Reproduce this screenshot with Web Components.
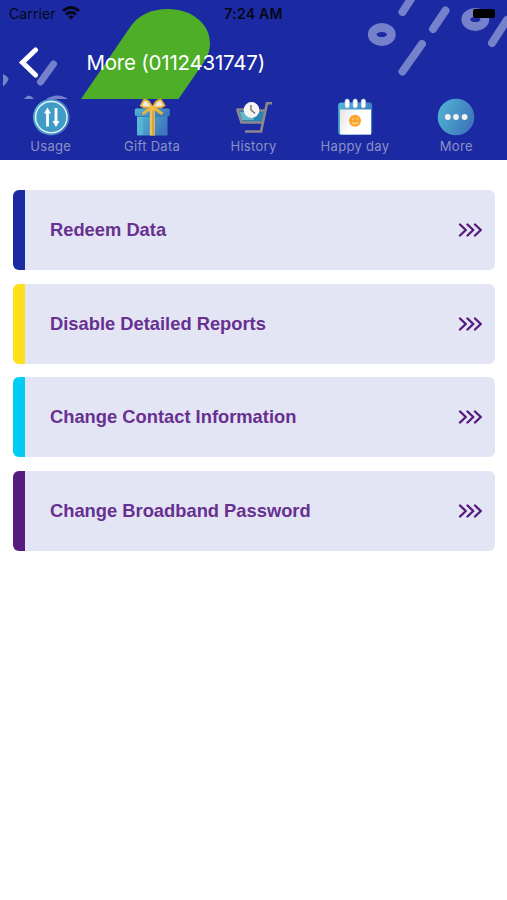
<!DOCTYPE html>
<html lang="en">
<head>
<meta charset="utf-8">
<meta name="viewport" content="width=device-width">
<title>More</title>
<style>
html,body{margin:0;height:100%;background:#fff;font-family:Inter,"Liberation Sans",sans-serif}
</style>
</head>
<body>
<more-page></more-page>
<script>
const define = (name, html) => {
  const t = document.createElement('template');
  t.innerHTML = html;
  customElements.define(name, class extends HTMLElement {
    constructor() {
      super();
      this.attachShadow({ mode: 'open' }).append(t.content.cloneNode(true));
    }
  });
};

define('header-art', `
<style>:host{display:block;position:absolute;inset:0 0 auto 0;height:98.5px;overflow:hidden}svg{display:block}</style>
<svg width="507" height="99" viewBox="0 0 507 99">
  <path d="M81 99 L129.500 28 C138 15 151 9 168 9 C192 9 210 24 210 43 C210 50 208 56 204 62 L178.500 99Z" fill="#4eae28"/>
  <g stroke="#7581ca" fill="none" stroke-linecap="round" stroke-width="8">
    <ellipse cx="381.800" cy="34.500" rx="9.500" ry="7" stroke-width="8.800"/>
    <ellipse cx="475.300" cy="19.500" rx="9.500" ry="7" stroke-width="8.800"/>
    <path d="M402.500 12 L413 -4 M433 29 L445.500 10.500 M402.500 71.500 L422 44 M492 43 L507 20"/>
    <path d="M40.500 82 L53.500 64" stroke-width="7"/>
  </g>
  <path d="M3 74 Q9 77 8.500 80 L4 86 Q2 86 3 82Z" fill="#7581ca"/>
  <path d="M24 99 Q29 92 34 99Z M46 99 Q58 92 68 99Z" fill="#7581ca"/>
</svg>`);

define('status-bar', `
<style>
:host{display:grid;grid-template-columns:1fr auto 1fr;align-items:center;height:28px;color:#050716;font-size:14px;line-height:28px;position:relative}
.l{display:flex;align-items:center;gap:6px;padding-left:9px}
.l span{letter-spacing:.12px}
b{font-weight:600;font-size:14px;letter-spacing:.25px}
.r{display:flex;justify-content:flex-end;padding-right:12px}
.r i{display:block;width:22px;height:9px;border-radius:2px;background:#000;margin-top:-1px}
svg{display:block;margin-top:-2px}
</style>
<div class="l"><span>Carrier</span>
<svg width="18" height="14" viewBox="0 0 18 14"><g fill="none" stroke="#050716" stroke-width="2.800"><path d="M1 5 Q9 -2 17 5"/><path d="M4 8.500 Q9 4 14 8.500"/></g><path d="M6.300 10.600 Q9 8.300 11.700 10.600 L9 13.500Z" fill="#050716"/></svg></div>
<b>7:24 AM</b>
<div class="r"><i></i></div>`);

define('nav-bar', `
<style>
:host{display:flex;align-items:center;height:70px;position:relative;color:#fff}
svg{display:block;margin-left:18px}
h1{font-weight:400;font-size:20.5px;line-height:26px;margin:0 0 0 48.5px;letter-spacing:-.22px;white-space:nowrap}
</style>
<svg width="20" height="32" viewBox="0 0 20 32"><path d="M17.500 3 L4.500 15.500 L17.500 28" fill="none" stroke="#fff" stroke-width="5" stroke-linecap="round" stroke-linejoin="miter"/></svg>
<h1><slot></slot></h1>`);

define('tab-item', `
<style>
:host{flex:1 1 0;display:flex;flex-direction:column;align-items:center;color:#8b91c5;font-size:13px;line-height:16px;letter-spacing:.3px;white-space:nowrap}
::slotted(svg){display:block;width:40px;height:40px}
</style>
<slot name="icon"></slot><span><slot></slot></span>`);

define('tab-strip', `
<style>:host{display:flex;height:61px;position:relative}svg{display:block}</style>
<svg width="0" height="0" style="position:absolute"><defs>
<linearGradient id="g" x1="0" x2="1" y1="0" y2=".4"><stop stop-color="#52b8d6"/><stop offset="1" stop-color="#3f78bd"/></linearGradient>
<linearGradient id="p" x1="0" x2="1" y1="0" y2=".4"><stop offset="0" stop-color="#e2e2e2"/><stop offset=".55" stop-color="#fff"/></linearGradient></defs></svg>
<tab-item><svg slot="icon" viewBox="0 0 40 40"><circle cx="20.300" cy="19.200" r="18.300" fill="url(#g)"/><circle cx="20.300" cy="19.200" r="15.700" fill="#419bc7" stroke="#e7f3f8" stroke-width="1.400"/><g fill="#fff"><path d="M16.500 9.500 L20 15.500 H17.900 V28.500 H15.100 V15.500 H13Z"/><path d="M25 29 L21.500 23 H23.600 V10 H26.400 V23 H28.500Z"/></g></svg>Usage</tab-item>
<tab-item><svg slot="icon" viewBox="0 0 40 40"><path d="M5 18 H35.500 V37.500 H5Z" fill="url(#g)"/><rect x="2.800" y="10.500" width="35" height="7.500" rx="1.500" fill="url(#g)"/><path d="M5 18.500H35.500" stroke="#3583b2"/><path d="M5 19 H11 V37 H5Z" fill="#62c1d8" opacity=".5"/><path d="M17.800 11 H22.800 V37.500 H17.800Z" fill="#ebc260"/><path d="M21 11V37.500" stroke="#d59c2c" stroke-width="1.500"/><g fill="#f0ead8" stroke="#e2ae38" stroke-width="2" stroke-linejoin="round"><path d="M20 9.500 Q17 1 12 2 L8.800 7.500 L12 9.500Z M21 9.500 Q24 1 29 2 L32.500 7.500 L29 9.500Z"/></g><path d="M19 10 L10.500 16 M22 10 L30.500 16" stroke="#e7b341" stroke-width="3"/><circle cx="20.500" cy="10" r="2.600" fill="#f1bf43"/></svg>Gift Data</tab-item>
<tab-item><svg slot="icon" viewBox="0 0 40 40"><path d="M4 13 H31 L29.500 24 H7.500Z" fill="#2d81b3"/><path d="M6 14 H18 L20 22 H8Z" fill="#62b7cb"/><g fill="none" stroke="#8a888c" stroke-width="2.600"><path d="M38 5.300 H33 L27 33.500 H11"/><path d="M3.500 12 L7.500 24.500 H28"/><path d="M2.500 11.500 H10 M23 12.500 H31"/></g><circle cx="17.500" cy="12" r="7.900" fill="#f6f4f3"/><path d="M17 7 V12 L21 15.500" stroke="#666" stroke-width="1.300" fill="none"/></svg>History</tab-item>
<tab-item><svg slot="icon" viewBox="0 0 40 40"><rect x="3.200" y="4.500" width="34" height="32.500" rx="3" fill="url(#g)"/><path d="M5 11.500 H36 V36.500 H6.500 Q5 36.500 5 35Z" fill="url(#p)"/><g fill="#fff" stroke="#a7c6df" stroke-width=".6"><rect x="10" y="1" width="4.400" height="9" rx="2.200"/><rect x="18" y="1" width="4.400" height="9" rx="2.200"/><rect x="26.200" y="1" width="4.400" height="9" rx="2.200"/></g><circle cx="20" cy="22.700" r="6" fill="#f9a32a"/><g stroke="#ffe0a0" fill="none" stroke-width="1.200"><path d="M17 21H19 M21.300 21H23.300 M17 24.500 Q20 27 23 24.500"/></g></svg>Happy day</tab-item>
<tab-item><svg slot="icon" viewBox="0 0 40 40"><circle cx="20" cy="19" r="18.300" fill="url(#g)"/><g fill="#f4f1e9"><circle cx="11.800" cy="19" r="2.900"/><circle cx="20" cy="19" r="2.900"/><circle cx="28.600" cy="19" r="2.900"/></g></svg>More</tab-item>`);

define('app-header', `
<style>:host{display:block;position:relative;height:159.5px;background:#1b2aa2}tab-strip{margin-top:-.3px}</style>
<header-art></header-art>
<status-bar></status-bar>
<nav-bar>More (0112431747)</nav-bar>
<tab-strip></tab-strip>`);

define('menu-card', `
<style>
:host{display:flex;align-items:center;box-sizing:border-box;height:80px;border-radius:6px;overflow:hidden;background:#e3e5f4;color:#673091;font:bold 18.33px/24px "Liberation Sans",Arial,sans-serif}
i{align-self:stretch;width:12.4px;background:var(--accent);margin-right:24.600px}
span{flex:1;white-space:nowrap}
svg{display:block;margin-right:12px}
</style>
<i></i><span><slot></slot></span>
<svg width="25" height="14" viewBox="0 0 25 14"><path d="M2 1.500 L7.800 7 L2 12.500 M9.500 1.500 L15.300 7 L9.500 12.500 M17 1.500 L22.800 7 L17 12.500" fill="none" stroke="#551b7d" stroke-width="2.400" stroke-linecap="round" stroke-linejoin="round"/></svg>`);

define('more-page', `
<style>
:host{display:block;min-height:900px;background:#fff}
main{display:flex;flex-direction:column;gap:13.6px;padding:30.8px 12.5px 0 13px}
</style>
<app-header></app-header>
<main>
<menu-card style="--accent:#1b2aa2">Redeem Data</menu-card>
<menu-card style="--accent:#ffe11b">Disable Detailed Reports</menu-card>
<menu-card style="--accent:#00cdf4">Change Contact Information</menu-card>
<menu-card style="--accent:#551b7d">Change Broadband Password</menu-card>
</main>`);
</script>
</body>
</html>
